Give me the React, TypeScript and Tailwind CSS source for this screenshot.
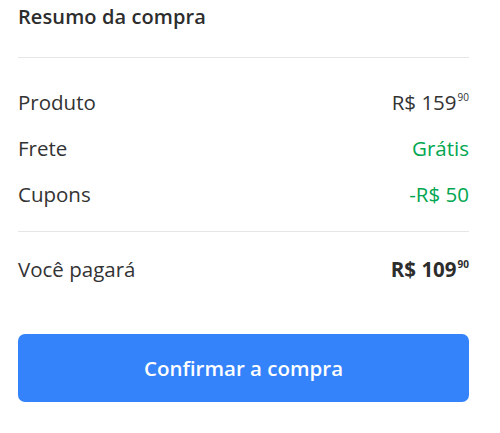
export default function App() {
  const font = { fontFamily: '"Open Sans", "Liberation Sans", sans-serif' };

  const rows = [
    { label: 'Produto', value: <Price int="159" cents="90" />, green: false },
    { label: 'Frete', value: 'Grátis', green: true },
    { label: 'Cupons', value: '-R$ 50', green: true },
  ];

  return (
    <div className="w-[500px] h-[433px] bg-white text-[#333333]" style={font}>
      <div className="pl-[18px] pr-[31px] pt-[3px]">
        <h2 className="text-[20px] font-semibold leading-[28px] tracking-[0.1px] text-[#2d2d2d] pb-[26px] border-b border-[#e6e6e6]">
          Resumo da compra
        </h2>

        <div className="flex flex-col gap-[21px] pt-[32px] pb-[24px] border-b border-[#e6e6e6]">
          {rows.map((row) => (
            <div key={row.label} className="flex items-center justify-between h-[25px] text-[20.5px]">
              <span>{row.label}</span>
              <span className={row.green ? 'text-[#00a650]' : ''}>{row.value}</span>
            </div>
          ))}
        </div>

        <div className="flex items-center justify-between h-[25px] mt-[25px] text-[20.5px]">
          <span>Você pagará</span>
          <span className="font-bold text-[#2d2d2d]">
            <Price int="109" cents="90" />
          </span>
        </div>

        <button className="mt-[52px] w-full h-[68px] rounded-[7px] bg-[#3483fa] text-white text-[20.5px] font-semibold">
          Confirmar a compra
        </button>
      </div>
    </div>
  );
}

function Price({ int, cents }: { int: string; cents: string }) {
  return (
    <span className="inline-flex items-start">
      R$ {int}
      <span className="text-[10px] leading-none mt-[5px] ml-[1px]">{cents}</span>
    </span>
  );
}
